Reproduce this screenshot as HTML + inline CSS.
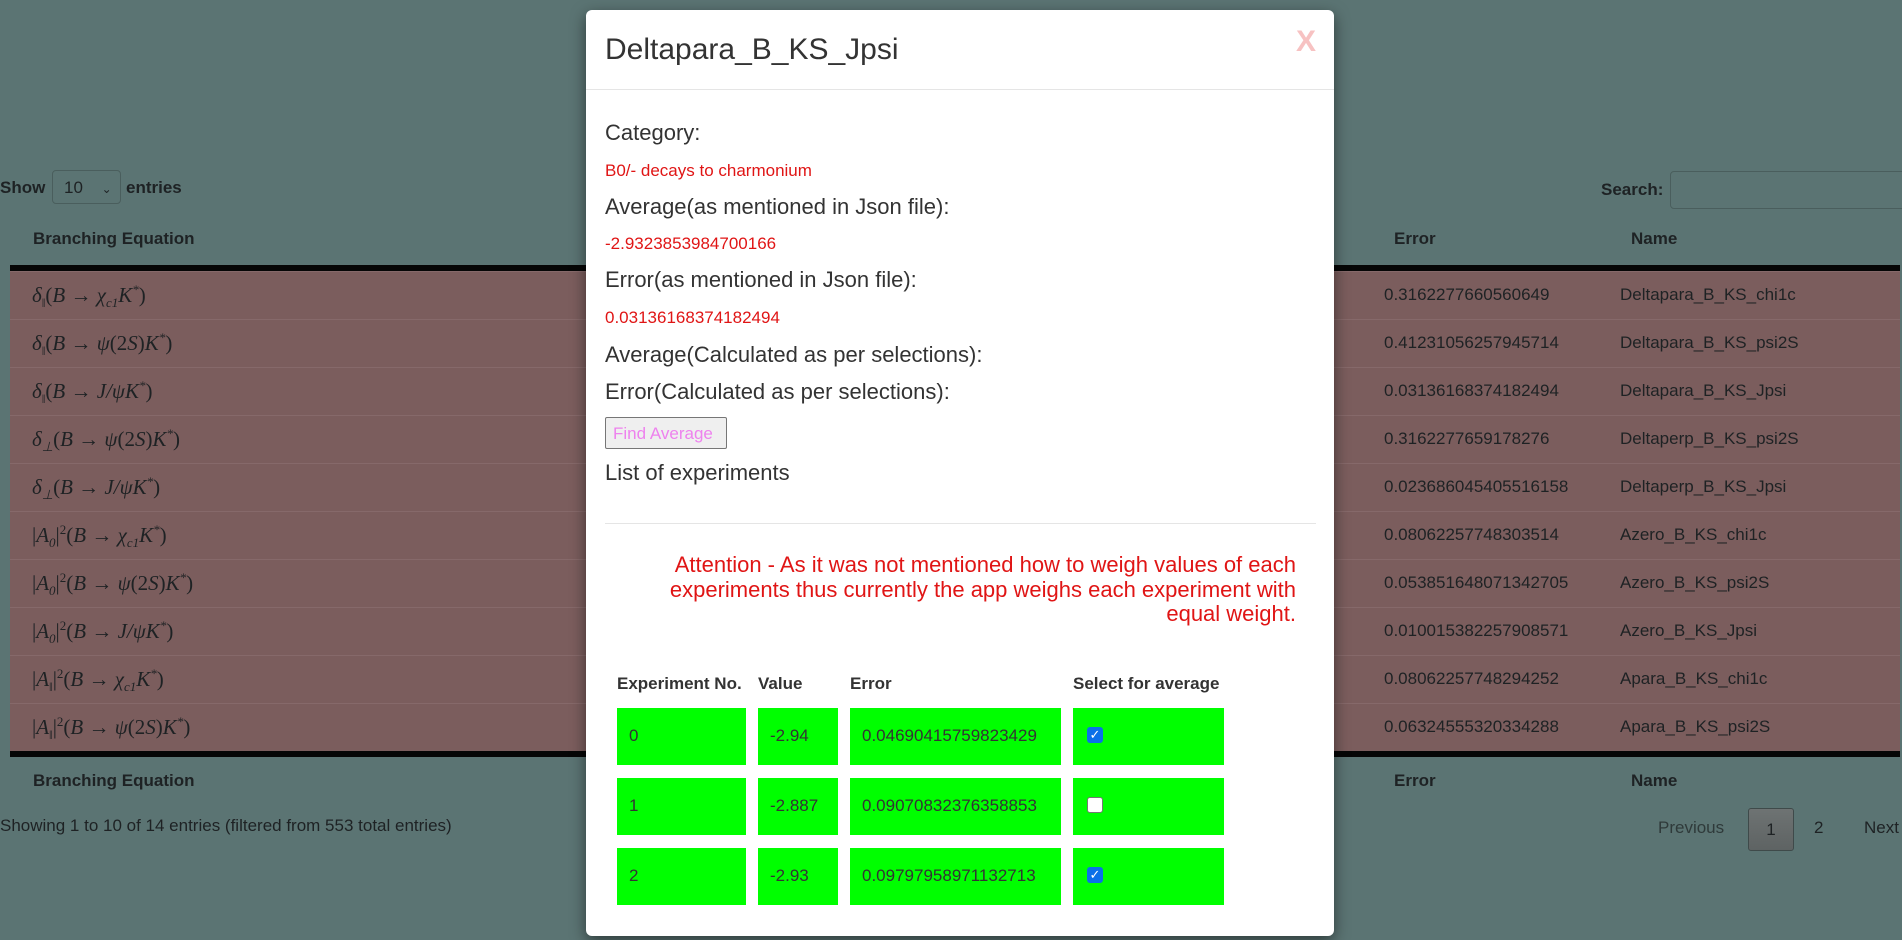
<!DOCTYPE html>
<html><head><meta charset="utf-8"><style>
*{box-sizing:border-box;margin:0;padding:0}
body{width:1902px;height:940px;overflow:hidden;background:#5b7473;font-family:"Liberation Sans",sans-serif;color:#1e2224;position:relative}
.a{position:absolute;white-space:nowrap}
.b{font-weight:bold;font-size:17px}
.row{position:absolute;left:10px;width:1890px;height:48px;background:#7b5d5d;border-top:1px solid #86696a}
.m{position:absolute;left:22px;font-family:"Liberation Serif",serif;font-style:italic;font-size:21px;top:10px}
.m .u{font-style:normal}
.m sub{font-size:13px}
.m sup{font-size:13px}
.e{position:absolute;left:1374px;top:13px;font-size:17px}
.n{position:absolute;left:1610px;top:13px;font-size:17px}
.modal{position:absolute;left:586px;top:10px;width:748px;height:926px;background:#fff;border-radius:6px;box-shadow:0 5px 15px rgba(0,0,0,.5);color:#333}
.lab{position:absolute;left:19px;font-size:22px;color:#333}
.red{position:absolute;left:19px;font-size:17px;color:#e01515}
.cell{position:absolute;background:#00ff00;height:57px;font-size:17px;color:#333;padding:18px 0 0 12px}
.th{position:absolute;top:664px;font-size:17px;font-weight:bold;color:#333}
.cb{position:absolute;left:14px;top:19px;width:16px;height:16px;border-radius:3px}
</style></head><body>
<div class="a" style="left:0;top:178px;font-size:17px;font-weight:bold">Show</div>
<div class="a" style="left:52px;top:170px;width:69px;height:34px;border:1px solid #4a5e5d;border-radius:4px;font-size:17px;padding:7px 0 0 11px">10 <span style="font-size:12px;margin-left:14px">&#8964;</span></div>
<div class="a" style="left:126px;top:178px;font-size:17px;font-weight:bold">entries</div>
<div class="a b" style="left:1601px;top:180px">Search:</div>
<div class="a" style="left:1670px;top:171px;width:240px;height:38px;border:1px solid #4a5e5d;border-radius:4px"></div>
<div class="a b" style="left:33px;top:229px">Branching Equation</div>
<div class="a b" style="left:1394px;top:229px">Error</div>
<div class="a b" style="left:1631px;top:229px">Name</div>
<div class="a" style="left:10px;top:265px;width:1890px;height:6px;background:#060606"></div>

<div class="row" style="top:271px"><div class="m">δ<sub>‖</sub><span class="u">(</span>B <span class="u">→</span> χ<sub>c1</sub>K<sup>*</sup><span class="u">)</span></div><div class="e">0.3162277660560649</div><div class="n">Deltapara_B_KS_chi1c</div></div>
<div class="row" style="top:319px"><div class="m">δ<sub>‖</sub><span class="u">(</span>B <span class="u">→</span> ψ<span class="u">(2</span>S<span class="u">)</span>K<sup>*</sup><span class="u">)</span></div><div class="e">0.41231056257945714</div><div class="n">Deltapara_B_KS_psi2S</div></div>
<div class="row" style="top:367px"><div class="m">δ<sub>‖</sub><span class="u">(</span>B <span class="u">→</span> J/ψK<sup>*</sup><span class="u">)</span></div><div class="e">0.03136168374182494</div><div class="n">Deltapara_B_KS_Jpsi</div></div>
<div class="row" style="top:415px"><div class="m">δ<sub>⊥</sub><span class="u">(</span>B <span class="u">→</span> ψ<span class="u">(2</span>S<span class="u">)</span>K<sup>*</sup><span class="u">)</span></div><div class="e">0.3162277659178276</div><div class="n">Deltaperp_B_KS_psi2S</div></div>
<div class="row" style="top:463px"><div class="m">δ<sub>⊥</sub><span class="u">(</span>B <span class="u">→</span> J/ψK<sup>*</sup><span class="u">)</span></div><div class="e">0.023686045405516158</div><div class="n">Deltaperp_B_KS_Jpsi</div></div>
<div class="row" style="top:511px"><div class="m"><span class="u">|</span>A<sub>0</sub><span class="u">|<sup>2</sup>(</span>B <span class="u">→</span> χ<sub>c1</sub>K<sup>*</sup><span class="u">)</span></div><div class="e">0.08062257748303514</div><div class="n">Azero_B_KS_chi1c</div></div>
<div class="row" style="top:559px"><div class="m"><span class="u">|</span>A<sub>0</sub><span class="u">|<sup>2</sup>(</span>B <span class="u">→</span> ψ<span class="u">(2</span>S<span class="u">)</span>K<sup>*</sup><span class="u">)</span></div><div class="e">0.053851648071342705</div><div class="n">Azero_B_KS_psi2S</div></div>
<div class="row" style="top:607px"><div class="m"><span class="u">|</span>A<sub>0</sub><span class="u">|<sup>2</sup>(</span>B <span class="u">→</span> J/ψK<sup>*</sup><span class="u">)</span></div><div class="e">0.010015382257908571</div><div class="n">Azero_B_KS_Jpsi</div></div>
<div class="row" style="top:655px"><div class="m"><span class="u">|</span>A<sub>‖</sub><span class="u">|<sup>2</sup>(</span>B <span class="u">→</span> χ<sub>c1</sub>K<sup>*</sup><span class="u">)</span></div><div class="e">0.08062257748294252</div><div class="n">Apara_B_KS_chi1c</div></div>
<div class="row" style="top:703px;height:48px"><div class="m"><span class="u">|</span>A<sub>‖</sub><span class="u">|<sup>2</sup>(</span>B <span class="u">→</span> ψ<span class="u">(2</span>S<span class="u">)</span>K<sup>*</sup><span class="u">)</span></div><div class="e">0.06324555320334288</div><div class="n">Apara_B_KS_psi2S</div></div>
<div class="a" style="left:10px;top:751px;width:1890px;height:6px;background:#060606"></div>
<div class="a b" style="left:33px;top:771px">Branching Equation</div>
<div class="a b" style="left:1394px;top:771px">Error</div>
<div class="a b" style="left:1631px;top:771px">Name</div>
<div class="a" style="left:0;top:816px;font-size:17px">Showing 1 to 10 of 14 entries (filtered from 553 total entries)</div>
<div class="a" style="left:1658px;top:818px;font-size:17px;color:#2f3a3a">Previous</div>
<div class="a" style="left:1748px;top:808px;width:46px;height:43px;border:1px solid #3f4a4a;border-radius:3px;background:linear-gradient(#6e7373,#5e6363);font-size:17px;text-align:center;padding-top:11px">1</div>
<div class="a" style="left:1814px;top:818px;font-size:17px">2</div>
<div class="a" style="left:1864px;top:818px;font-size:17px">Next</div>

<div class="modal">
<div class="a" style="left:19px;top:23px;font-size:30px;color:#333">Deltapara_B_KS_Jpsi</div>
<div class="a" style="left:710px;top:15px;font-size:30px;font-weight:bold;color:#f7c2c2">X</div>
<div class="a" style="left:0;top:79px;width:748px;height:1px;background:#e5e5e5"></div>
<div class="lab a" style="top:110px">Category:</div>
<div class="red a" style="top:151px">B0/- decays to charmonium</div>
<div class="lab a" style="top:184px">Average(as mentioned in Json file):</div>
<div class="red a" style="top:224px">-2.9323853984700166</div>
<div class="lab a" style="top:257px">Error(as mentioned in Json file):</div>
<div class="red a" style="top:298px">0.03136168374182494</div>
<div class="lab a" style="top:332px">Average(Calculated as per selections):</div>
<div class="lab a" style="top:369px">Error(Calculated as per selections):</div>
<div class="a" style="left:19px;top:407px;width:122px;height:32px;border:1px solid #767676;border-radius:2px;background:#efefef;color:#ee82ee;font-size:17px;padding:6px 0 0 7px">Find Average</div>
<div class="lab a" style="top:450px">List of experiments</div>
<div class="a" style="left:19px;top:513px;width:711px;height:1px;background:#e5e5e5"></div>
<div class="a" style="right:38px;top:543px;font-size:22px;line-height:24.5px;color:#e01515;text-align:right;white-space:normal;width:680px">Attention - As it was not mentioned how to weigh values of each experiments thus currently the app weighs each experiment with equal weight.</div>
<div class="th" style="left:31px">Experiment No.</div>
<div class="th" style="left:172px">Value</div>
<div class="th" style="left:264px">Error</div>
<div class="th" style="left:487px">Select for average</div>

<div class="cell" style="left:31px;top:698px;width:129px">0</div>
<div class="cell" style="left:172px;top:698px;width:80px">-2.94</div>
<div class="cell" style="left:264px;top:698px;width:211px">0.04690415759823429</div>
<div class="cell" style="left:487px;top:698px;width:151px"><div class="cb" style="background:#0b6fe8;color:#fff;font-size:13px;text-align:center;line-height:16px">✓</div></div>
<div class="cell" style="left:31px;top:768px;width:129px">1</div>
<div class="cell" style="left:172px;top:768px;width:80px">-2.887</div>
<div class="cell" style="left:264px;top:768px;width:211px">0.09070832376358853</div>
<div class="cell" style="left:487px;top:768px;width:151px"><div class="cb" style="background:#fff;border:1px solid #777"></div></div>
<div class="cell" style="left:31px;top:838px;width:129px">2</div>
<div class="cell" style="left:172px;top:838px;width:80px">-2.93</div>
<div class="cell" style="left:264px;top:838px;width:211px">0.09797958971132713</div>
<div class="cell" style="left:487px;top:838px;width:151px"><div class="cb" style="background:#0b6fe8;color:#fff;font-size:13px;text-align:center;line-height:16px">✓</div></div>
</div>
</body></html>
